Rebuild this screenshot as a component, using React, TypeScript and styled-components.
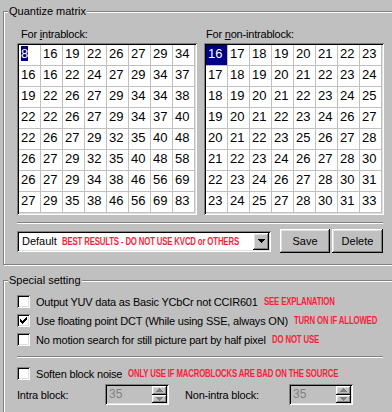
import React from 'react';
import styled, { createGlobalStyle, css } from 'styled-components';

const GlobalStyle = createGlobalStyle`
    html, body {
        margin: 0;
        padding: 0;
        background: #c0c0c0;
    }
    body {
        font-family: "Liberation Sans", Arial, sans-serif;
        font-size: 11px;
        color: #000;
    }
`;

const sunken = css`
    box-shadow:
        inset 1px 1px 0 #808080,
        inset -1px -1px 0 #fff,
        inset 2px 2px 0 #000,
        inset -2px -2px 0 #dfdfdf;
`;

const raised = css`
    box-shadow:
        inset -1px -1px 0 #000,
        inset 1px 1px 0 #fff,
        inset -2px -2px 0 #808080,
        inset 2px 2px 0 #dfdfdf;
`;

const Page = styled.div`
    width: 392px;
    height: 412px;
    overflow: hidden;
    box-sizing: border-box;
    padding: 4px 0 0 3px;
    display: flex;
    flex-direction: column;
    gap: 8px;
    background: #c0c0c0;
`;

const Group = styled.fieldset`
    margin: 0;
    padding: 0;
    min-width: 0;
    width: 400px;
    flex-shrink: 0;
    box-sizing: border-box;
    border: 1px solid #808080;
    box-shadow: inset 1px 1px 0 #fff, 1px 1px 0 #fff;
`;

const Legend = styled.legend`
    margin-left: 4px;
    padding: 0 1px;
    line-height: 14px;
    font-size: 11px;
    background: #c0c0c0;
    position: relative;
`;

const GroupBody = styled.div<{ $pad: string }>`
    padding: ${(p) => p.$pad};
    width: 366px;
    display: flex;
    flex-direction: column;
`;

const Matrices = styled.div`
    display: flex;
    gap: 7px;
`;

const MatrixColumn = styled.div`
    display: flex;
    flex-direction: column;
    gap: 2px;
`;

const Caption = styled.div<{ $indent: number }>`
    line-height: 14px;
    padding-left: ${(p) => p.$indent}px;
    letter-spacing: -0.2px;
`;

const Matrix = styled.div`
    display: grid;
    grid-template-columns: repeat(8, 22px);
    grid-auto-rows: 21px;
    padding: 2px;
    background: #fff;
    ${sunken}
`;

const Cell = styled.div<{ $selected?: boolean }>`
    box-sizing: border-box;
    border-right: 1px solid #c0c0c0;
    border-bottom: 1px solid #c0c0c0;
    padding-left: 2px;
    font-size: 13px;
    line-height: 18px;
    background: ${(p) => (p.$selected ? '#000080' : '#fff')};
    color: ${(p) => (p.$selected ? '#fff' : '#000')};
`;

const Highlight = styled.span`
    background: #000080;
    color: #fff;
`;

const Separator = styled.div<{ $top: number; $bottom: number }>`
    height: 1px;
    margin: ${(p) => p.$top}px 0 ${(p) => p.$bottom}px;
    background: #808080;
    border-bottom: 1px solid #fff;
`;

const Controls = styled.div`
    display: flex;
    align-items: center;
    height: 24px;
`;

const Combo = styled.div`
    width: 254px;
    height: 21px;
    box-sizing: border-box;
    padding: 2px;
    margin-right: 7px;
    display: flex;
    align-items: center;
    background: #fff;
    ${sunken}
`;

const ComboText = styled.span`
    flex: 1;
    min-width: 0;
    padding-left: 3px;
    white-space: nowrap;
    overflow: hidden;
`;

const ComboArrow = styled.div`
    width: 16px;
    height: 17px;
    flex-shrink: 0;
    display: flex;
    align-items: center;
    justify-content: center;
    background: #c0c0c0;
    ${raised}
`;

const Button = styled.div<{ $width: number }>`
    width: ${(p) => p.$width}px;
    height: 24px;
    margin-left: 2px;
    display: flex;
    align-items: center;
    justify-content: center;
    background: #c0c0c0;
    ${raised}
`;

/* the original uses a narrow bold face; squeeze the regular bold to its width */
const Hint = styled.span<{ $gap?: number }>`
    display: inline-block;
    margin-left: ${(p) => p.$gap ?? 6}px;
    font-size: 10px;
    font-weight: bold;
    letter-spacing: -0.2px;
    color: #f81e3c;
    white-space: nowrap;
    transform: scaleX(0.78);
    transform-origin: left center;
`;

const CheckRow = styled.div`
    display: flex;
    align-items: center;
    height: 19px;
    white-space: nowrap;
`;

const Box = styled.span`
    width: 13px;
    height: 13px;
    flex-shrink: 0;
    margin-right: 6px;
    box-sizing: border-box;
    display: flex;
    align-items: center;
    justify-content: center;
    background: #fff;
    ${sunken}
`;

const Label = styled.span`
    letter-spacing: -0.2px;
`;

const SpinRow = styled.div`
    display: flex;
    align-items: center;
    height: 21px;
    margin-top: 1px;
`;

const SpinLabel = styled.span<{ $width: number }>`
    width: ${(p) => p.$width}px;
    letter-spacing: -0.2px;
`;

const Spin = styled.div`
    width: 64px;
    height: 21px;
    box-sizing: border-box;
    padding: 2px;
    margin-right: 16px;
    display: flex;
    background: #c0c0c0;
    ${sunken}
`;

const SpinValue = styled.span`
    flex: 1;
    padding-left: 2px;
    font-size: 12px;
    line-height: 17px;
    color: #808080;
`;

const SpinButtons = styled.div`
    width: 15px;
    display: flex;
    flex-direction: column;
`;

const SpinButton = styled.div`
    flex: 1;
    display: flex;
    align-items: center;
    justify-content: center;
    background: #c0c0c0;
    ${raised}
`;

const intra = [
    [8, 16, 19, 22, 26, 27, 29, 34],
    [16, 16, 22, 24, 27, 29, 34, 37],
    [19, 22, 26, 27, 29, 34, 34, 38],
    [22, 22, 26, 27, 29, 34, 37, 40],
    [22, 26, 27, 29, 32, 35, 40, 48],
    [26, 27, 29, 32, 35, 40, 48, 58],
    [26, 27, 29, 34, 38, 46, 56, 69],
    [27, 29, 35, 38, 46, 56, 69, 83],
];

const nonIntra = [
    [16, 17, 18, 19, 20, 21, 22, 23],
    [17, 18, 19, 20, 21, 22, 23, 24],
    [18, 19, 20, 21, 22, 23, 24, 25],
    [19, 20, 21, 22, 23, 24, 26, 27],
    [20, 21, 22, 23, 25, 26, 27, 28],
    [21, 22, 23, 24, 26, 27, 28, 30],
    [22, 23, 24, 26, 27, 28, 30, 31],
    [23, 24, 25, 27, 28, 30, 31, 33],
];

const options = [
    { label: 'Output YUV data as Basic YCbCr not CCIR601', hint: 'SEE EXPLANATION', checked: false },
    { label: 'Use floating point DCT (While using SSE, always ON)', hint: 'TURN ON IF ALLOWED', checked: true },
    { label: 'No motion search for still picture part by half pixel', hint: 'DO NOT USE', checked: false },
];

const CheckMark = () => (
    <svg width="7" height="7" viewBox="0 0 7 7" shapeRendering="crispEdges">
        <path d="M6 0h1v3h-1v1h-1v1h-1v1h-1v1h-1v-1h-1v-1h-1v-3h1v1h1v1h1v-1h1v-1h1z" fill="#000" />
    </svg>
);

const Arrow = ({ up, color }: { up?: boolean; color: string }) => (
    <svg width="7" height="4" viewBox="0 0 7 4" shapeRendering="crispEdges">
        <path d={up ? 'M3 0h1v1h1v1h1v1h1v1h-7v-1h1v-1h1v-1h1z' : 'M0 0h7v1h-1v1h-1v1h-1v1h-1v-1h-1v-1h-1v-1h-1z'} fill={color} />
    </svg>
);

type MatrixProps = { values: number[][]; focused?: boolean };

const MatrixGrid: React.FC<MatrixProps> = ({ values, focused }) => (
    <Matrix>
        {values.flat().map((value, i) => (
            <Cell key={i} $selected={i === 0 && !focused}>
                {i === 0 && focused ? <Highlight>{value}</Highlight> : value}
            </Cell>
        ))}
    </Matrix>
);

const SpinEdit: React.FC<{ value: number }> = ({ value }) => (
    <Spin>
        <SpinValue>{value}</SpinValue>
        <SpinButtons>
            <SpinButton>
                <Arrow up color="#808080" />
            </SpinButton>
            <SpinButton>
                <Arrow color="#808080" />
            </SpinButton>
        </SpinButtons>
    </Spin>
);

const App: React.FC = () => {
    return (
        <Page>
            <GlobalStyle />
            <Group>
                <Legend>Quantize matrix</Legend>
                <GroupBody $pad="9px 0 11px 13px">
                    <Matrices>
                        <MatrixColumn>
                            <Caption $indent={4}>
                                For <u>i</u>ntrablock:
                            </Caption>
                            <MatrixGrid values={intra} focused />
                        </MatrixColumn>
                        <MatrixColumn>
                            <Caption $indent={2}>
                                For <u>n</u>on-intrablock:
                            </Caption>
                            <MatrixGrid values={nonIntra} />
                        </MatrixColumn>
                    </Matrices>
                    <Separator $top={7} $bottom={5} />
                    <Controls>
                        <Combo>
                            <ComboText>
                                Default
                                <Hint $gap={5}>BEST RESULTS - DO NOT USE KVCD or OTHERS</Hint>
                            </ComboText>
                            <ComboArrow>
                                <Arrow color="#000" />
                            </ComboArrow>
                        </Combo>
                        <Button $width={51}>Save</Button>
                        <Button $width={52}>Delete</Button>
                    </Controls>
                </GroupBody>
            </Group>
            <Group>
                <Legend>Special setting</Legend>
                <GroupBody $pad="5px 0 20px 13px">
                    {options.map((option) => (
                        <CheckRow key={option.label}>
                            <Box>{option.checked && <CheckMark />}</Box>
                            <Label>{option.label}</Label>
                            <Hint>{option.hint}</Hint>
                        </CheckRow>
                    ))}
                    <Separator $top={7} $bottom={6} />
                    <CheckRow>
                        <Box />
                        <Label>Soften block noise</Label>
                        <Hint>ONLY USE IF MACROBLOCKS ARE BAD ON THE SOURCE</Hint>
                    </CheckRow>
                    <SpinRow>
                        <SpinLabel $width={88}>Intra block:</SpinLabel>
                        <SpinEdit value={35} />
                        <SpinLabel $width={104}>Non-intra block:</SpinLabel>
                        <SpinEdit value={35} />
                    </SpinRow>
                </GroupBody>
            </Group>
        </Page>
    );
};

export default App;
